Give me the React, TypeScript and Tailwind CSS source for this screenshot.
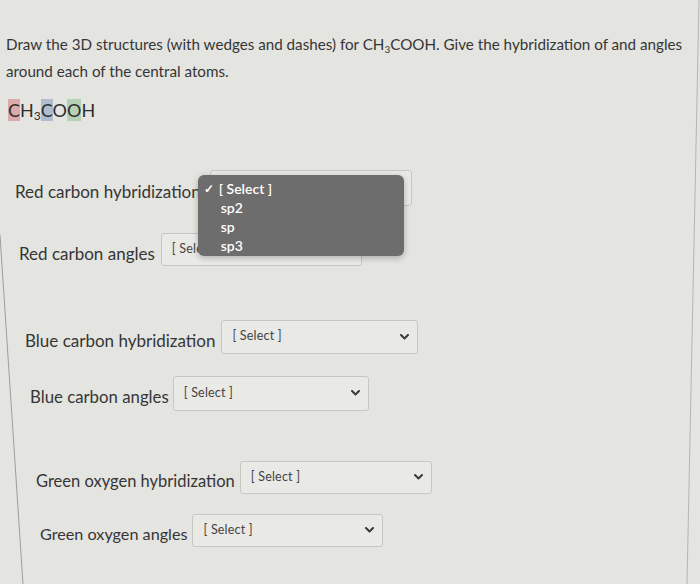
type Row = {
  label: string;
  pl: string;
  mt: string;
  h: string;
  w: string;
  gap: string;
  size: string;
};

const rows: Row[] = [
  { label: "Red carbon hybridization", pl: "pl-[15px]", mt: "mt-[47px]", h: "h-[36px]", w: "w-[202px]", gap: "gap-[9px]", size: "text-[17px]" },
  { label: "Red carbon angles", pl: "pl-[19px]", mt: "mt-[27px]", h: "h-[33px]", w: "w-[201px]", gap: "gap-[6px]", size: "text-[17px]" },
  { label: "Blue carbon hybridization", pl: "pl-[25px]", mt: "mt-[53px]", h: "h-[34px]", w: "w-[197px]", gap: "gap-[6px]", size: "text-[17px]" },
  { label: "Blue carbon angles", pl: "pl-[30px]", mt: "mt-[22px]", h: "h-[35px]", w: "w-[196px]", gap: "gap-[4px]", size: "text-[16.8px]" },
  { label: "Green oxygen hybridization", pl: "pl-[36px]", mt: "mt-[50px]", h: "h-[33px]", w: "w-[192px]", gap: "gap-[5px]", size: "text-[16.5px]" },
  { label: "Green oxygen angles", pl: "pl-[40px]", mt: "mt-[20px]", h: "h-[33px]", w: "w-[191px]", gap: "gap-[5px]", size: "text-[16.2px]" },
];

function Chevron() {
  return (
    <svg width="9" height="6" viewBox="0 0 9 6" className="shrink-0">
      <polyline points="1,1 4.5,4.5 8,1" fill="none" stroke="#3a3a3a" strokeWidth="2" strokeLinecap="round" strokeLinejoin="round" />
    </svg>
  );
}

function SelectBox({ h, w }: { h: string; w: string }) {
  return (
    <div
      className={[
        "flex items-center justify-between rounded-[3px] border border-[#c6c6c3] bg-[#e9e9e6] pl-[10px] pr-[8px]",
        h,
        w,
      ].join(" ")}
    >
      <span className="text-[12.5px] text-[#444] tracking-[0.2px]">[ Select ]</span>
      <Chevron />
    </div>
  );
}

function DropdownMenu() {
  return (
    <div className="absolute left-[-12px] top-[5px] z-10 w-[206px] h-[81px] rounded-[6px] bg-[#6d6d6d] pt-[4px] text-[14px] font-semibold leading-[19px] text-white shadow-[0_2px_6px_rgba(0,0,0,0.25)]">
      <div className="flex items-center pl-[6px]">
        <span className="w-[15px] text-[12px]">✓</span>
        <span>[ Select ]</span>
      </div>
      <div className="pl-[23px]">sp2</div>
      <div className="pl-[23px]">sp</div>
      <div className="pl-[23px]">sp3</div>
    </div>
  );
}

export default function App() {
  return (
    <div
      className="relative w-[700px] h-[584px] overflow-hidden bg-[#e4e4e0] text-[#363636]"
      style={{ fontFamily: "Lato, 'Open Sans', sans-serif" }}
    >
      <svg className="pointer-events-none absolute inset-0" width="700" height="584">
        <line x1="0" y1="235" x2="23" y2="584" stroke="#9d9d9a" strokeWidth="1" />
        <line x1="699" y1="0" x2="687" y2="584" stroke="#b4b4b1" strokeWidth="1" />
      </svg>

      <div className="flex flex-col">
        <p className="pt-[31px] pl-[6px] w-[692px] text-[15.2px] leading-[27px]">
          Draw the 3D structures (with wedges and dashes) for CH<sub className="text-[10px]">3</sub>COOH. Give the
          hybridization of and angles around each of the central atoms.
        </p>

        <div className="mt-[12px] pl-[8px] text-[18px] leading-[26px] text-[#2e2e2e]">
          <span className="bg-[#dcaaaa]">C</span>
          <span>H</span>
          <sub className="text-[12px]">3</sub>
          <span className="bg-[#aebdd0]">C</span>
          <span>O</span>
          <span className="bg-[#b6d2b6]">O</span>
          <span>H</span>
        </div>

        {rows.map((r, i) => (
          <div key={r.label} className={["flex items-center", r.pl, r.mt, r.gap].join(" ")}>
            <span className={["pt-[8px] whitespace-nowrap", r.size].join(" ")}>{r.label}</span>
            <div className="relative">
              <SelectBox h={r.h} w={r.w} />
              {i === 0 ? <DropdownMenu /> : null}
            </div>
          </div>
        ))}
      </div>
    </div>
  );
}
